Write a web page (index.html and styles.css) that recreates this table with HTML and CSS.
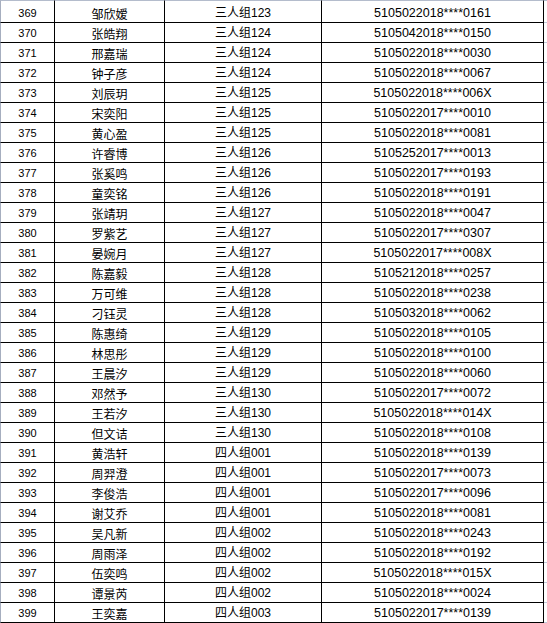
FILE: index.html
```html
<!DOCTYPE html>
<html lang="zh">
<head>
<meta charset="utf-8">
<link rel="stylesheet" href="styles.css">
</head>
<body>
<div class="sheet">
<div class="row first"><div class="c n">369</div><div class="c nm">邹欣嫒</div><div class="c g">三人组123</div><div class="c id">5105022018****0161</div><div class="c x"></div></div>
<div class="row"><div class="c n">370</div><div class="c nm">张皓翔</div><div class="c g">三人组124</div><div class="c id">5105042018****0150</div><div class="c x"></div></div>
<div class="row"><div class="c n">371</div><div class="c nm">邢嘉瑞</div><div class="c g">三人组124</div><div class="c id">5105022018****0030</div><div class="c x"></div></div>
<div class="row"><div class="c n">372</div><div class="c nm">钟子彦</div><div class="c g">三人组124</div><div class="c id">5105022018****0067</div><div class="c x"></div></div>
<div class="row"><div class="c n">373</div><div class="c nm">刘辰玥</div><div class="c g">三人组125</div><div class="c id">5105022018****006X</div><div class="c x"></div></div>
<div class="row"><div class="c n">374</div><div class="c nm">宋奕阳</div><div class="c g">三人组125</div><div class="c id">5105022017****0010</div><div class="c x"></div></div>
<div class="row"><div class="c n">375</div><div class="c nm">黄心盈</div><div class="c g">三人组125</div><div class="c id">5105022018****0081</div><div class="c x"></div></div>
<div class="row"><div class="c n">376</div><div class="c nm">许睿博</div><div class="c g">三人组126</div><div class="c id">5105252017****0013</div><div class="c x"></div></div>
<div class="row"><div class="c n">377</div><div class="c nm">张奚鸣</div><div class="c g">三人组126</div><div class="c id">5105022017****0193</div><div class="c x"></div></div>
<div class="row"><div class="c n">378</div><div class="c nm">童奕铭</div><div class="c g">三人组126</div><div class="c id">5105022018****0191</div><div class="c x"></div></div>
<div class="row"><div class="c n">379</div><div class="c nm">张靖玥</div><div class="c g">三人组127</div><div class="c id">5105022018****0047</div><div class="c x"></div></div>
<div class="row"><div class="c n">380</div><div class="c nm">罗紫艺</div><div class="c g">三人组127</div><div class="c id">5105022017****0307</div><div class="c x"></div></div>
<div class="row"><div class="c n">381</div><div class="c nm">晏婉月</div><div class="c g">三人组127</div><div class="c id">5105022017****008X</div><div class="c x"></div></div>
<div class="row"><div class="c n">382</div><div class="c nm">陈嘉毅</div><div class="c g">三人组128</div><div class="c id">5105212018****0257</div><div class="c x"></div></div>
<div class="row"><div class="c n">383</div><div class="c nm">万可维</div><div class="c g">三人组128</div><div class="c id">5105022018****0238</div><div class="c x"></div></div>
<div class="row"><div class="c n">384</div><div class="c nm">刁钰灵</div><div class="c g">三人组128</div><div class="c id">5105032018****0062</div><div class="c x"></div></div>
<div class="row"><div class="c n">385</div><div class="c nm">陈惠绮</div><div class="c g">三人组129</div><div class="c id">5105022018****0105</div><div class="c x"></div></div>
<div class="row"><div class="c n">386</div><div class="c nm">林思彤</div><div class="c g">三人组129</div><div class="c id">5105022018****0100</div><div class="c x"></div></div>
<div class="row"><div class="c n">387</div><div class="c nm">王晨汐</div><div class="c g">三人组129</div><div class="c id">5105022018****0060</div><div class="c x"></div></div>
<div class="row"><div class="c n">388</div><div class="c nm">邓然予</div><div class="c g">三人组130</div><div class="c id">5105022017****0072</div><div class="c x"></div></div>
<div class="row"><div class="c n">389</div><div class="c nm">王若汐</div><div class="c g">三人组130</div><div class="c id">5105022018****014X</div><div class="c x"></div></div>
<div class="row"><div class="c n">390</div><div class="c nm">但文诘</div><div class="c g">三人组130</div><div class="c id">5105022018****0108</div><div class="c x"></div></div>
<div class="row"><div class="c n">391</div><div class="c nm">黄浩轩</div><div class="c g">四人组001</div><div class="c id">5105022018****0139</div><div class="c x"></div></div>
<div class="row"><div class="c n">392</div><div class="c nm">周羿澄</div><div class="c g">四人组001</div><div class="c id">5105022017****0073</div><div class="c x"></div></div>
<div class="row"><div class="c n">393</div><div class="c nm">李俊浩</div><div class="c g">四人组001</div><div class="c id">5105022017****0096</div><div class="c x"></div></div>
<div class="row"><div class="c n">394</div><div class="c nm">谢艾乔</div><div class="c g">四人组001</div><div class="c id">5105022018****0081</div><div class="c x"></div></div>
<div class="row"><div class="c n">395</div><div class="c nm">吴凡新</div><div class="c g">四人组002</div><div class="c id">5105022018****0243</div><div class="c x"></div></div>
<div class="row"><div class="c n">396</div><div class="c nm">周雨泽</div><div class="c g">四人组002</div><div class="c id">5105022018****0192</div><div class="c x"></div></div>
<div class="row"><div class="c n">397</div><div class="c nm">伍奕鸣</div><div class="c g">四人组002</div><div class="c id">5105022018****015X</div><div class="c x"></div></div>
<div class="row"><div class="c n">398</div><div class="c nm">谭景芮</div><div class="c g">四人组002</div><div class="c id">5105022018****0024</div><div class="c x"></div></div>
<div class="row"><div class="c n">399</div><div class="c nm">王奕嘉</div><div class="c g">四人组003</div><div class="c id">5105022017****0139</div><div class="c x"></div></div>
</div>
</body>
</html>
```
FILE: styles.css
```css
html, body {
  margin: 0;
  padding: 0;
  background: #ffffff;
}
.sheet {
  width: 547px;
  height: 623px;
  overflow: hidden;
  color: #000000;
}
.row {
  display: grid;
  grid-template-columns: 55px 110px 157px 222px 3px;
  height: 20px;
}
.row.first {
  height: 23px;
}
.c {
  box-sizing: border-box;
  display: flex;
  align-items: flex-end;
  justify-content: center;
  border-right: 1px solid #000000;
  border-bottom: 1px solid #000000;
  padding-bottom: 1px;
  line-height: 15px;
  white-space: nowrap;
}
.first .c {
  border-top: 1px solid #b4bccc;
}
.n {
  border-left: 1px solid #a6aebf;
  font-family: "Liberation Sans", Arial, sans-serif;
  font-size: 11px;
}
.nm {
  font-family: "Noto Sans CJK SC", sans-serif;
  font-size: 12px;
}
.g {
  font-family: "Liberation Sans", "Noto Sans CJK SC", sans-serif;
  font-size: 12px;
}
.id {
  font-family: "Liberation Sans", Arial, sans-serif;
  font-size: 12.5px;
}
.c.x {
  border-right: none;
  border-bottom: 1px solid #c3cad8;
}
```
